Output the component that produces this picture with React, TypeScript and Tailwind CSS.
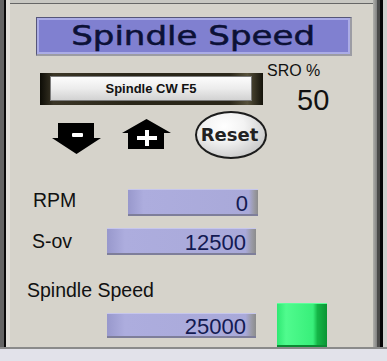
import React from "react";

const ValueBox = ({ value, w, h }: { value: string; w: string; h: string }) => (
  <div
    className={`${w} ${h} flex items-center justify-end pr-[10px] pt-[2px] bg-[linear-gradient(to_right,#9898cc,#adadde_12%,#a9a9d9_93%,#9a9aa6_97%,#8c8c8c)] shadow-[inset_0_1px_0_#c6c6ec,inset_0_-2px_0_#7e7e9a]`}
  >
    <span className="text-[22px] leading-[22px] text-[#131a52] font-['Liberation_Sans',Arial,sans-serif]">
      {value}
    </span>
  </div>
);

export default function App() {
  return (
    <div className="w-[387px] h-[361px] flex flex-col bg-[#d6d3cb] overflow-hidden font-['Liberation_Sans',Arial,sans-serif] text-[#111]">
      <div className="flex h-[347px]">
        {/* left frame */}
        <div className="w-[4px] bg-[#646464]" />
        <div className="w-[2px] bg-[#0a0a0a]" />
        <div className="w-[4px] bg-[#e2e0da]" />

        {/* center */}
        <div className="flex-1 flex flex-col">
          <div className="h-[3px] bg-[#c8c7c2]" />
          <div className="h-px bg-[#666666]" />

          <div className="flex-1 flex flex-col">
            {/* Title */}
            <div className="ml-[26px] mt-[13px] w-[316px] h-[39px] flex items-center justify-center bg-[#8080d0] border-t border-l border-[#56567a] border-r-2 border-b-2 border-r-[#9c9ca4] border-b-[#9c9ca4] shadow-[inset_0_0_0_2px_#abace6]">
              <span className="text-[26px] leading-[26px] font-normal text-[#0c1136] scale-x-[1.31] [-webkit-text-stroke:0.5px_#0c1136] font-['DejaVu_Sans',Verdana,sans-serif]">
                Spindle Speed
              </span>
            </div>

            {/* Section: button, arrows, SRO */}
            <div className="flex mt-[6px]">
              <div className="ml-[30px] w-[227px] flex flex-col">
                <div className="mt-[11px] w-[223px] h-[32px] pl-[10px] pr-[11px] pt-[3px] pb-[4px] bg-[linear-gradient(to_right,#0d0c06,#3a3526_6%,#2a2619_40%,#2a2619_85%,#58523c_93%,#14120a)]">
                  <div className="w-full h-full flex items-center justify-center border border-[#7c7c7c] bg-[linear-gradient(to_bottom,#fcfcfc,#ececec_50%,#d2d2d2)]">
                    <span className="text-[13px] leading-[13px] font-bold text-[#111]">Spindle CW F5</span>
                  </div>
                </div>
                <div className="mt-[6px] h-[49px] flex items-start">
                  <svg className="ml-[12px] mt-[12px]" width="49" height="31" viewBox="0 0 49 31">
                    <path d="M6 0H42V15H49L24.5 31L0 15H6Z" fill="#000" />
                    <rect x="20" y="10" width="11" height="4" rx="1" fill="#fff" />
                  </svg>
                  <svg className="ml-[21px] mt-[8px]" width="49" height="30" viewBox="0 0 49 30">
                    <path d="M24.5 0L49 14H42V30H6V14H0Z" fill="#000" />
                    <rect x="15" y="17" width="20" height="4" fill="#fff" />
                    <rect x="23" y="11" width="4" height="16" fill="#fff" />
                  </svg>
                  <div className="ml-[24px] w-[72px] h-[48px] rounded-[50%] border-[2.5px] border-[#1c1c1c] flex items-center justify-center bg-[radial-gradient(ellipse_at_40%_30%,#ffffff_0%,#f3f3f3_35%,#c8c8c8_80%,#a4a4a4_100%)]">
                    <span className="text-[18px] leading-[18px] font-bold text-[#222] -ml-[3px] font-['DejaVu_Sans',Verdana,sans-serif]">
                      Reset
                    </span>
                  </div>
                </div>
              </div>
              <div className="flex flex-col">
                <div className="text-[16px] leading-[18px] text-[#111]">SRO %</div>
                <div className="ml-[30px] mt-[4px] text-[29px] leading-[33px] text-[#111]">50</div>
              </div>
            </div>

            {/* RPM */}
            <div className="flex items-start mt-[29px] pl-[23px]">
              <div className="w-[95px] mt-[1px] text-[19.5px] leading-[20px]">RPM</div>
              <ValueBox value="0" w="w-[130px]" h="h-[27px]" />
            </div>

            {/* S-ov */}
            <div className="flex items-start mt-[12px] pl-[22px]">
              <div className="w-[75px] mt-[3px] text-[19.5px] leading-[20px]">S-ov</div>
              <ValueBox value="12500" w="w-[149px]" h="h-[27px]" />
            </div>

            {/* Spindle Speed label */}
            <div className="ml-[17px] mt-[25px] text-[19.5px] leading-[20px]">Spindle Speed</div>

            {/* bottom row */}
            <div className="flex items-start mt-[3px] pl-[97px]">
              <div className="mt-[10px]">
                <ValueBox value="25000" w="w-[149px]" h="h-[25px]" />
              </div>
              <div className="ml-[21px] w-[50px] h-[44px] bg-[linear-gradient(to_right,#2fe873,#50fb8e_18%,#38ef7a_72%,#14b647_81%,#0a9434)] shadow-[inset_0_-2px_0_#0b8a33,inset_0_1px_0_#5cff9a]" />
            </div>
          </div>
        </div>

        {/* right frame */}
        <div className="w-[4px] bg-[linear-gradient(to_right,#b0b0ac,#808080)]" />
        <div className="w-[3px] bg-[#4a4a4a]" />
        <div className="w-[3px] bg-[#050505]" />
        <div className="w-[4px] bg-[#cfcfcc]" />
      </div>
      <div className="h-[2px] bg-[#8a8a8a]" />
      <div className="flex-1 bg-[#e2e2ea]" />
    </div>
  );
}
